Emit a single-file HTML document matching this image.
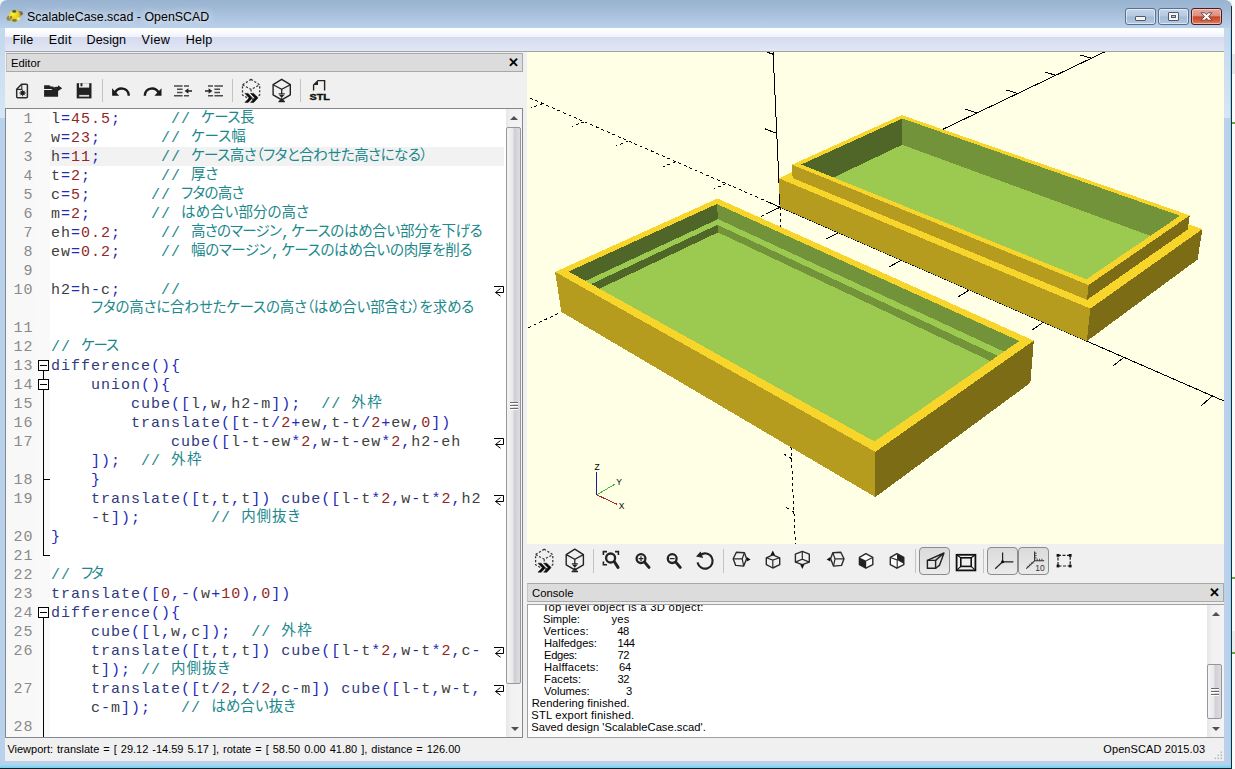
<!DOCTYPE html><html lang="ja"><head><meta charset="utf-8"><title>ScalableCase.scad - OpenSCAD</title><style>

*{box-sizing:border-box;margin:0;padding:0}
html,body{width:1235px;height:769px;overflow:hidden;background:#f4f4f4}
body{position:relative;font-family:"Liberation Sans","Noto Sans CJK JP",sans-serif;font-size:12px;color:#000}
.abs{position:absolute}
#desk{left:1232px;top:0;width:3px;height:769px;background:#fbfbfb}
#frame{left:0;top:0;width:1232px;height:768px;background:linear-gradient(180deg,#98b3d0 0px,#a2bbd7 10px,#b0c7e2 20px,#b9d1ea 28px,#b9d1ea 100%);border-radius:7px 7px 0 0}
#frame-r{left:1231px;top:6px;width:1px;height:763px;background:#1c2a3a}
#frame-b{left:0;top:768px;width:1232px;height:1px;background:#10202c}
#frame-b2{left:0;top:765px;width:1231px;height:3px;background:linear-gradient(180deg,#9fd8f0,#6fd3f3)}
#ttlx{}.ttl{left:27px;top:8px;height:18px;line-height:18px;font-size:12.4px;white-space:nowrap;color:#000;text-shadow:0 0 7px rgba(255,255,255,.8),0 0 10px rgba(255,255,255,.6)}
#client{left:5px;top:28px;width:1219px;height:733px;background:#f0f0f0}
#menubar{left:0;top:0;width:1219px;height:24px;background:linear-gradient(180deg,#ffffff 0,#fcfdfe 3px,#eff2fa 9px,#d5dbee 9px,#dbe1f1 16px,#e2e7f6 23px);border-bottom:1px solid #a3a3a3}
.mi{position:absolute;top:3px;height:18px;line-height:18px;font-size:12.6px;white-space:nowrap}
.docktitle{position:absolute;height:19px;background:#dcdcdc;border:1px solid #a8a8a8;border-left-color:#c4c4c4;font-size:11.3px;line-height:19px;padding-left:4px;white-space:nowrap}
.docktitle b{position:absolute;right:3px;top:0;font-weight:bold;font-size:13px;line-height:17px}
.sep{position:absolute;width:1px;background:#c5c5c5}
.ico{position:absolute;overflow:visible}
/* editor */
#ed{left:0;top:80px;width:518px;height:630px;border:1px solid #828790;background:#fff;overflow:hidden}
#gutter{left:0;top:0;width:44px;height:628px;background:#f8f8f8}
#foldm{left:29px;top:0;width:15px;height:628px;background:#f9f9f9}
.row{position:absolute;left:0;height:19px;line-height:19px;white-space:pre;font-family:"Liberation Mono","Noto Sans CJK JP",monospace;font-size:15px;letter-spacing:1px}
.ln{position:absolute;left:0;width:27.5px;text-align:right;color:#8a8a8a}
.code{position:absolute;left:45px;color:#404040}
.k{color:#303a7c}.o{color:#2329b8}.n{color:#922626}.c{color:#1b888c}
.j{font-family:"Noto Sans CJK JP",sans-serif;font-size:14.5px;letter-spacing:0;font-feature-settings:"palt";position:relative;top:-3.5px;display:inline-block;white-space:pre;vertical-align:top;line-height:19px;overflow:visible}
.wrapm{position:absolute}
/* scrollbars */
.sb{position:absolute;background:linear-gradient(90deg,#e6e6e6,#f1f1f1 30%,#f4f4f4);}
.thumb{position:absolute;border:1px solid #979797;border-radius:2px;background:linear-gradient(90deg,#f4f4f4 0,#e9e9ec 45%,#cfcfd6 55%,#dcdce2 100%)}
.arr{position:absolute;width:0;height:0;border-left:4px solid transparent;border-right:4px solid transparent}
.arr.up{border-bottom:4px solid #505050}
.arr.dn{border-top:4px solid #505050}
.grip{position:absolute;width:8px;height:1px;background:#6a6a6a;box-shadow:0 1px 0 #fff}
/* console */
#con{left:522px;top:576px;width:697px;height:134px;background:#fff;border:1px solid #a0a0a0;border-right:none;overflow:hidden}
.cl{position:absolute;height:12px;line-height:12px;font-size:11.2px;white-space:pre;color:#000}
#status{left:0;top:710px;width:1219px;height:23px;background:#f0f0f0}
#status span{position:absolute;top:4px;font-size:11px;line-height:14px;white-space:pre}
.pbtn{position:absolute;border:1px solid #8e8e8e;border-radius:3px;background:linear-gradient(180deg,#dedede,#e9e9e9)}

</style></head><body>
<div id="desk" class="abs"></div>
<div class="abs" style="left:1232px;top:54px;width:3px;height:20px;background:#e8e8e8"></div>
<div class="abs" style="left:1232px;top:631px;width:3px;height:22px;background:#ececec"></div>
<div class="abs" style="left:1232px;top:122px;width:3px;height:2px;background:#6aa43a"></div>
<div class="abs" style="left:1232px;top:577px;width:3px;height:2px;background:#6aa43a"></div>
<div class="abs" style="left:1232px;top:652px;width:3px;height:2px;background:#6aa43a"></div>
<div id="frame" class="abs"></div><div id="frame-b2" class="abs"></div><div class="abs" style="left:0;top:28px;width:5px;height:90px;background:linear-gradient(180deg,#c3d7ed,#d6e6f6)"></div><div class="abs" style="left:1224px;top:28px;width:6px;height:90px;background:linear-gradient(180deg,#c3d7ed,#d6e6f6)"></div><div class="abs" style="left:1229.5px;top:30px;width:1.5px;height:737px;background:#8fd6f2"></div><div id="frame-r" class="abs"></div><div id="frame-b" class="abs"></div>
<svg class="abs" style="left:0;top:0" width="32" height="28" viewBox="0 0 32 28"><defs><radialGradient id="ag" cx=".35" cy=".35" r=".75"><stop offset="0" stop-color="#f8f046"/><stop offset=".6" stop-color="#e8cc28"/><stop offset="1" stop-color="#b89a18"/></radialGradient></defs><ellipse cx="20.3" cy="13.4" rx="2.3" ry="2.3" fill="#8c7636"/><ellipse cx="22.1" cy="13.6" rx=".8" ry="1" fill="#5c5c50"/><ellipse cx="9.3" cy="18.3" rx="2.7" ry="2.5" fill="#94845a"/><ellipse cx="14.6" cy="15.8" rx="5.8" ry="5.6" fill="url(#ag)"/><ellipse cx="14.2" cy="11.4" rx="2.1" ry="1.4" fill="#4d6612"/><ellipse cx="18.5" cy="18.7" rx="2" ry="1.8" fill="#e2ee6c"/><ellipse cx="14.4" cy="20.4" rx="2.3" ry="1.3" fill="#8c7a12"/><ellipse cx="11" cy="17.4" rx="1.3" ry="1.6" fill="#9a8638"/></svg>
<div class="abs ttl" id="ttl" style="letter-spacing:0.017px;">ScalableCase.scad - OpenSCAD</div>

<div class="abs" style="left:1125px;top:8px;width:31px;height:17px;border:1px solid #5a6f8c;border-radius:3px;box-shadow:inset 0 0 0 1px rgba(255,255,255,.55);background:linear-gradient(180deg,#c5d6ea 0,#b4c9e2 48%,#a3bad6 52%,#b2c8e2 100%)"></div>
<div class="abs" style="left:1135px;top:16px;width:11px;height:5px;border:1px solid #50596a;border-radius:1px;background:#f4f4f4"></div>
<div class="abs" style="left:1158px;top:8px;width:31px;height:17px;border:1px solid #5a6f8c;border-radius:3px;box-shadow:inset 0 0 0 1px rgba(255,255,255,.55);background:linear-gradient(180deg,#c5d6ea 0,#b4c9e2 48%,#a3bad6 52%,#b2c8e2 100%)"></div>
<div class="abs" style="left:1168px;top:12px;width:11px;height:9px;border:1px solid #50596a;border-radius:1px;background:#f4f4f4"></div>
<div class="abs" style="left:1171px;top:15px;width:5px;height:3px;border:1px solid #50596a;background:#b8c6da"></div>
<div class="abs" style="left:1191px;top:8px;width:31px;height:17px;border:1px solid #4a1c22;border-radius:3px;box-shadow:inset 0 0 0 1px rgba(255,220,210,.6);background:linear-gradient(180deg,#e9a99b 0,#dd8e7f 46%,#c8452c 52%,#d4603f 80%,#e08a6a 100%)"></div>
<svg class="abs" style="left:1200px;top:11px" width="13" height="11" viewBox="0 0 13 11"><path d="M1 1.8 4.7 1.8 6.5 3.7 8.3 1.8 12 1.8 8.5 5.4 12 9.2 8.3 9.2 6.5 7.2 4.7 9.2 1 9.2 4.5 5.4Z" fill="#fff" stroke="#5a3f44" stroke-width=".9" stroke-linejoin="round"/></svg>

<div id="client" class="abs">
<div id="menubar" class="abs">
<span class="mi" id="m0" style="letter-spacing:0.176px;left:7.4px">File</span>
<span class="mi" id="m1" style="letter-spacing:0.349px;left:43.7px">Edit</span>
<span class="mi" id="m2" style="letter-spacing:0.049px;left:81.6px">Design</span>
<span class="mi" id="m3" style="letter-spacing:0.430px;left:136.6px">View</span>
<span class="mi" id="m4" style="letter-spacing:0.248px;left:180.7px">Help</span>
</div>
<div class="docktitle" style="left:1px;top:25px;width:517px">Editor<b>&#x2715;</b></div>
<div id="ed" class="abs">
<div id="gutter" class="abs"></div><div id="foldm" class="abs"></div>
<div class="abs" style="left:44px;top:38px;width:454px;height:19px;background:#f2f2f2"></div>
<div class="row" style="top:0.5px;width:500px"><span class="ln">1</span><span class="code">l<span class="o">=</span><span class="n">45.5</span><span class="o">;</span>     <span class="c">// <span class="j" style="letter-spacing:-0.42px">ケース長</span></span></span></div>
<div class="row" style="top:19.5px;width:500px"><span class="ln">2</span><span class="code">w<span class="o">=</span><span class="n">23</span><span class="o">;</span>      <span class="c">// <span class="j" style="letter-spacing:-0.04px">ケース幅</span></span></span></div>
<div class="row" style="top:38.5px;width:500px"><span class="ln">3</span><span class="code">h<span class="o">=</span><span class="n">11</span><span class="o">;</span>      <span class="c">// <span class="j" style="letter-spacing:-0.48px">ケース高さ（フタと合わせた高さになる）</span></span></span></div>
<div class="row" style="top:57.5px;width:500px"><span class="ln">4</span><span class="code">t<span class="o">=</span><span class="n">2</span><span class="o">;</span>       <span class="c">// <span class="j" style="letter-spacing:-0.41px">厚さ</span></span></span></div>
<div class="row" style="top:76.5px;width:500px"><span class="ln">5</span><span class="code">c<span class="o">=</span><span class="n">5</span><span class="o">;</span>      <span class="c">// <span class="j" style="letter-spacing:-0.73px">フタの高さ</span></span></span></div>
<div class="row" style="top:95.5px;width:500px"><span class="ln">6</span><span class="code">m<span class="o">=</span><span class="n">2</span><span class="o">;</span>      <span class="c">// <span class="j" style="letter-spacing:0.05px">はめ合い部分の高さ</span></span></span></div>
<div class="row" style="top:114.5px;width:500px"><span class="ln">7</span><span class="code">eh<span class="o">=</span><span class="n">0.2</span><span class="o">;</span>    <span class="c">// <span class="j" style="letter-spacing:-0.78px">高さのマージン</span>,<span class="j" style="letter-spacing:-0.30px">ケースのはめ合い部分を下げる</span></span></span></div>
<div class="row" style="top:133.5px;width:500px"><span class="ln">8</span><span class="code">ew<span class="o">=</span><span class="n">0.2</span><span class="o">;</span>    <span class="c">// <span class="j" style="letter-spacing:-0.42px">幅のマージン</span>,<span class="j" style="letter-spacing:-0.30px">ケースのはめ合いの肉厚を削る</span></span></span></div>
<div class="row" style="top:152.5px;width:500px"><span class="ln">9</span><span class="code"></span></div>
<div class="row" style="top:171.5px;width:500px"><span class="ln">10</span><span class="code">h2<span class="o">=</span>h<span class="o">-</span>c<span class="o">;</span>    <span class="c">//</span></span></div>
<svg class="wrapm" style="left:488px;top:177px" width="11" height="11" viewBox="0 0 11 11"><path d="M0 .5H9.5V6.5H1.5M6.5 2.5 1.5 6.5 6.5 10.2" fill="none" stroke="#000" stroke-width="1"/></svg>
<div class="row" style="top:190.5px;width:500px"><span class="code"><span class="c">    <span class="j" style="letter-spacing:-0.18px">フタの高さに合わせたケースの高さ（はめ合い部含む）を求める</span></span></span></div>
<div class="row" style="top:209.5px;width:500px"><span class="ln">11</span><span class="code"></span></div>
<div class="row" style="top:228.5px;width:500px"><span class="ln">12</span><span class="code"><span class="c">// <span class="j" style="letter-spacing:-1.06px">ケース</span></span></span></div>
<div class="row" style="top:247.5px;width:500px"><span class="ln">13</span><span class="code"><span class="k">difference</span><span class="o">(</span><span class="o">)</span><span class="o">{</span></span></div>
<div class="row" style="top:266.5px;width:500px"><span class="ln">14</span><span class="code">    <span class="k">union</span><span class="o">(</span><span class="o">)</span><span class="o">{</span></span></div>
<div class="row" style="top:285.5px;width:500px"><span class="ln">15</span><span class="code">        <span class="k">cube</span><span class="o">(</span><span class="o">[</span>l<span class="o">,</span>w<span class="o">,</span>h2<span class="o">-</span>m<span class="o">]</span><span class="o">)</span><span class="o">;</span>  <span class="c">// <span class="j" style="letter-spacing:1.50px">外枠</span></span></span></div>
<div class="row" style="top:304.5px;width:500px"><span class="ln">16</span><span class="code">        <span class="k">translate</span><span class="o">(</span><span class="o">[</span>t<span class="o">-</span>t<span class="o">/</span><span class="n">2</span><span class="o">+</span>ew<span class="o">,</span>t<span class="o">-</span>t<span class="o">/</span><span class="n">2</span><span class="o">+</span>ew<span class="o">,</span><span class="n">0</span><span class="o">]</span><span class="o">)</span></span></div>
<div class="row" style="top:323.5px;width:500px"><span class="ln">17</span><span class="code">            <span class="k">cube</span><span class="o">(</span><span class="o">[</span>l<span class="o">-</span>t<span class="o">-</span>ew<span class="o">*</span><span class="n">2</span><span class="o">,</span>w<span class="o">-</span>t<span class="o">-</span>ew<span class="o">*</span><span class="n">2</span><span class="o">,</span>h2<span class="o">-</span>eh</span></div>
<svg class="wrapm" style="left:488px;top:329px" width="11" height="11" viewBox="0 0 11 11"><path d="M0 .5H9.5V6.5H1.5M6.5 2.5 1.5 6.5 6.5 10.2" fill="none" stroke="#000" stroke-width="1"/></svg>
<div class="row" style="top:342.5px;width:500px"><span class="code">    <span class="o">]</span><span class="o">)</span><span class="o">;</span>  <span class="c">// <span class="j" style="letter-spacing:1.50px">外枠</span></span></span></div>
<div class="row" style="top:361.5px;width:500px"><span class="ln">18</span><span class="code">    <span class="o">}</span></span></div>
<div class="row" style="top:380.5px;width:500px"><span class="ln">19</span><span class="code">    <span class="k">translate</span><span class="o">(</span><span class="o">[</span>t<span class="o">,</span>t<span class="o">,</span>t<span class="o">]</span><span class="o">)</span> <span class="k">cube</span><span class="o">(</span><span class="o">[</span>l<span class="o">-</span>t<span class="o">*</span><span class="n">2</span><span class="o">,</span>w<span class="o">-</span>t<span class="o">*</span><span class="n">2</span><span class="o">,</span>h2</span></div>
<svg class="wrapm" style="left:488px;top:386px" width="11" height="11" viewBox="0 0 11 11"><path d="M0 .5H9.5V6.5H1.5M6.5 2.5 1.5 6.5 6.5 10.2" fill="none" stroke="#000" stroke-width="1"/></svg>
<div class="row" style="top:399.5px;width:500px"><span class="code">    <span class="o">-</span>t<span class="o">]</span><span class="o">)</span><span class="o">;</span>       <span class="c">// <span class="j" style="letter-spacing:0.95px">内側抜き</span></span></span></div>
<div class="row" style="top:418.5px;width:500px"><span class="ln">20</span><span class="code"><span class="o">}</span></span></div>
<div class="row" style="top:437.5px;width:500px"><span class="ln">21</span><span class="code"></span></div>
<div class="row" style="top:456.5px;width:500px"><span class="ln">22</span><span class="code"><span class="c">// <span class="j" style="letter-spacing:-1.89px">フタ</span></span></span></div>
<div class="row" style="top:475.5px;width:500px"><span class="ln">23</span><span class="code"><span class="k">translate</span><span class="o">(</span><span class="o">[</span><span class="n">0</span><span class="o">,</span><span class="o">-</span><span class="o">(</span>w<span class="o">+</span><span class="n">10</span><span class="o">)</span><span class="o">,</span><span class="n">0</span><span class="o">]</span><span class="o">)</span></span></div>
<div class="row" style="top:494.5px;width:500px"><span class="ln">24</span><span class="code"><span class="k">difference</span><span class="o">(</span><span class="o">)</span><span class="o">{</span></span></div>
<div class="row" style="top:513.5px;width:500px"><span class="ln">25</span><span class="code">    <span class="k">cube</span><span class="o">(</span><span class="o">[</span>l<span class="o">,</span>w<span class="o">,</span>c<span class="o">]</span><span class="o">)</span><span class="o">;</span>  <span class="c">// <span class="j" style="letter-spacing:1.50px">外枠</span></span></span></div>
<div class="row" style="top:532.5px;width:500px"><span class="ln">26</span><span class="code">    <span class="k">translate</span><span class="o">(</span><span class="o">[</span>t<span class="o">,</span>t<span class="o">,</span>t<span class="o">]</span><span class="o">)</span> <span class="k">cube</span><span class="o">(</span><span class="o">[</span>l<span class="o">-</span>t<span class="o">*</span><span class="n">2</span><span class="o">,</span>w<span class="o">-</span>t<span class="o">*</span><span class="n">2</span><span class="o">,</span>c<span class="o">-</span></span></div>
<svg class="wrapm" style="left:488px;top:538px" width="11" height="11" viewBox="0 0 11 11"><path d="M0 .5H9.5V6.5H1.5M6.5 2.5 1.5 6.5 6.5 10.2" fill="none" stroke="#000" stroke-width="1"/></svg>
<div class="row" style="top:551.5px;width:500px"><span class="code">    t<span class="o">]</span><span class="o">)</span><span class="o">;</span> <span class="c">// <span class="j" style="letter-spacing:0.95px">内側抜き</span></span></span></div>
<div class="row" style="top:570.5px;width:500px"><span class="ln">27</span><span class="code">    <span class="k">translate</span><span class="o">(</span><span class="o">[</span>t<span class="o">/</span><span class="n">2</span><span class="o">,</span>t<span class="o">/</span><span class="n">2</span><span class="o">,</span>c<span class="o">-</span>m<span class="o">]</span><span class="o">)</span> <span class="k">cube</span><span class="o">(</span><span class="o">[</span>l<span class="o">-</span>t<span class="o">,</span>w<span class="o">-</span>t<span class="o">,</span></span></div>
<svg class="wrapm" style="left:488px;top:576px" width="11" height="11" viewBox="0 0 11 11"><path d="M0 .5H9.5V6.5H1.5M6.5 2.5 1.5 6.5 6.5 10.2" fill="none" stroke="#000" stroke-width="1"/></svg>
<div class="row" style="top:589.5px;width:500px"><span class="code">    c<span class="o">-</span>m<span class="o">]</span><span class="o">)</span><span class="o">;</span>   <span class="c">// <span class="j" style="letter-spacing:0.11px">はめ合い抜き</span></span></span></div>
<div class="row" style="top:608.5px;width:500px"><span class="ln">28</span><span class="code"></span></div>
<div class="abs" style="left:37px;top:262px;width:1px;height:8px;background:#000"></div>
<div class="abs" style="left:37px;top:281px;width:1px;height:166px;background:#000"></div>
<div class="abs" style="left:37px;top:370px;width:7px;height:1px;background:#000"></div>
<div class="abs" style="left:37px;top:446px;width:7px;height:1px;background:#000"></div>
<div class="abs" style="left:32px;top:251px;width:11px;height:11px;border:1px solid #000;background:#fff"></div><div class="abs" style="left:34px;top:256px;width:7px;height:1px;background:#000"></div>
<div class="abs" style="left:32px;top:270px;width:11px;height:11px;border:1px solid #000;background:#fff"></div><div class="abs" style="left:34px;top:275px;width:7px;height:1px;background:#000"></div>
<div class="abs" style="left:37px;top:509px;width:1px;height:119px;background:#000"></div>
<div class="abs" style="left:32px;top:498px;width:11px;height:11px;border:1px solid #000;background:#fff"></div><div class="abs" style="left:34px;top:503px;width:7px;height:1px;background:#000"></div>
<div class="sb" style="left:500px;top:0;width:16px;height:628px"></div>
<div class="arr up" style="left:504px;top:7px"></div>
<div class="arr dn" style="left:505px;top:618px"></div>
<div class="thumb" style="left:500px;top:18px;width:15px;height:557px"></div>
<div class="grip" style="left:504px;top:293px"></div>
<div class="grip" style="left:504px;top:296px"></div>
<div class="grip" style="left:504px;top:299px"></div>
</div>
<div class="docktitle" style="left:522px;top:555px;width:697px">Console<b>&#x2715;</b></div>
<div id="con" class="abs">
<div class="cl" id="c0" style="letter-spacing:0.315px;left:14.6px;top:-4px">Top level object is a 3D object:</div>
<div class="cl" id="c1" style="letter-spacing:-0.087px;left:15.1px;top:8px">Simple:</div>
<div class="cl" id="v1" style="letter-spacing:0.293px;left:83.4px;top:8px">yes</div>
<div class="cl" id="c2" style="letter-spacing:0.277px;left:15.5px;top:20px">Vertices:</div>
<div class="cl" id="v2" style="letter-spacing:-0.327px;left:89.2px;top:20px">48</div>
<div class="cl" id="c3" style="letter-spacing:-0.070px;left:16.1px;top:32px">Halfedges:</div>
<div class="cl" id="v3" style="letter-spacing:-0.624px;left:89.6px;top:32px">144</div>
<div class="cl" id="c4" style="letter-spacing:-0.341px;left:16.1px;top:44px">Edges:</div>
<div class="cl" id="v4" style="letter-spacing:-0.527px;left:89.6px;top:44px">72</div>
<div class="cl" id="c5" style="letter-spacing:0.186px;left:16.1px;top:56px">Halffacets:</div>
<div class="cl" id="v5" style="letter-spacing:-0.327px;left:91.0px;top:56px">64</div>
<div class="cl" id="c6" style="letter-spacing:0.045px;left:16.1px;top:68px">Facets:</div>
<div class="cl" id="v6" style="letter-spacing:-0.527px;left:89.6px;top:68px">32</div>
<div class="cl" id="c7" style="letter-spacing:-0.066px;left:16.1px;top:80px">Volumes:</div>
<div class="cl" id="v7" style="letter-spacing:-0.534px;left:97.9px;top:80px">3</div>
<div class="cl" id="c8" style="letter-spacing:0.084px;left:3.7px;top:92px">Rendering finished.</div>
<div class="cl" id="c9" style="letter-spacing:0.200px;left:3.3px;top:104px">STL export finished.</div>
<div class="cl" id="c10" style="letter-spacing:0.013px;left:3.3px;top:116px">Saved design 'ScalableCase.scad'.</div>
<div class="sb" style="left:679px;top:0;width:17px;height:132px"></div>
<div class="arr up" style="left:684px;top:7px"></div>
<div class="arr dn" style="left:684px;top:122px"></div>
<div class="thumb" style="left:679px;top:59px;width:15px;height:55px"></div>
<div class="grip" style="left:683px;top:83px"></div>
<div class="grip" style="left:683px;top:86px"></div>
<div class="grip" style="left:683px;top:89px"></div>
</div>
<div id="status" class="abs"><span id="st1" style="word-spacing:0.956px;left:2.4px">Viewport: translate = [ 29.12 -14.59 5.17 ], rotate = [ 58.50 0.00 41.80 ], distance = 126.00</span><span id="st2" style="letter-spacing:0.094px;left:1098.3px">OpenSCAD 2015.03</span>
<svg class="abs" style="left:1208.5px;top:13px" width="9" height="9" viewBox="0 0 9 9"><g fill="#bcbcbc"><rect x="6.5" y="0.5" width="1.6" height="1.6"/><rect x="6.5" y="3.5" width="1.6" height="1.6"/><rect x="6.5" y="6.5" width="1.6" height="1.6"/><rect x="3.5" y="3.5" width="1.6" height="1.6"/><rect x="3.5" y="6.5" width="1.6" height="1.6"/><rect x="0.5" y="6.5" width="1.6" height="1.6"/></g></svg>
</div>
</div>
<svg class="abs" style="left:0;top:0" width="1235" height="769" viewBox="0 0 1235 769"><defs><clipPath id="vp"><rect x="527" y="52" width="697" height="492"/></clipPath></defs>
<rect x="527" y="52" width="697" height="492" fill="#ffffe5"/>
<g clip-path="url(#vp)">
<g stroke="#000" stroke-width="1" shape-rendering="crispEdges">
<line x1="780.1" y1="207.2" x2="2098.2" y2="782.8"/>
<line x1="780.1" y1="207.2" x2="1255.5" y2="-20.3"/>
<line x1="780.1" y1="207.2" x2="708.9" y2="-1358.7"/>
<line x1="780.1" y1="207.2" x2="296.8" y2="-3.8" stroke-dasharray="3 3"/>
<line x1="780.1" y1="207.2" x2="-718.5" y2="924.3" stroke-dasharray="3 3"/>
<line x1="780.1" y1="207.2" x2="808.7" y2="837.5" stroke-dasharray="3 3"/>
<line x1="780.1" y1="207.2" x2="768.0" y2="213.0"/>
<line x1="780.1" y1="207.2" x2="768.4" y2="202.1"/>
<line x1="780.1" y1="207.2" x2="768.4" y2="202.1"/>
<line x1="838.4" y1="232.7" x2="826.3" y2="238.9"/>
<line x1="835.1" y1="180.9" x2="823.5" y2="176.2"/>
<line x1="776.7" y1="133.4" x2="764.7" y2="128.7"/>
<line x1="725.9" y1="183.6" x2="713.8" y2="189.0" stroke-dasharray="3 3"/>
<line x1="720.3" y1="235.8" x2="708.6" y2="230.3" stroke-dasharray="3 3"/>
<line x1="783.2" y1="276.2" x2="771.9" y2="270.8" stroke-dasharray="3 3"/>
<line x1="901.3" y1="260.1" x2="889.3" y2="266.9"/>
<line x1="886.0" y1="156.6" x2="874.4" y2="152.2"/>
<line x1="773.1" y1="54.2" x2="760.7" y2="50.0"/>
<line x1="675.5" y1="161.6" x2="663.4" y2="166.6" stroke-dasharray="3 3"/>
<line x1="655.2" y1="267.0" x2="643.5" y2="260.9" stroke-dasharray="3 3"/>
<line x1="786.2" y1="340.9" x2="775.2" y2="335.1" stroke-dasharray="3 3"/>
<line x1="969.4" y1="289.9" x2="957.6" y2="297.2"/>
<line x1="933.1" y1="134.0" x2="921.6" y2="130.0"/>
<line x1="769.3" y1="-30.9" x2="756.3" y2="-34.6"/>
<line x1="628.4" y1="141.0" x2="616.3" y2="145.7" stroke-dasharray="3 3"/>
<line x1="584.0" y1="301.1" x2="572.4" y2="294.4" stroke-dasharray="3 3"/>
<line x1="788.9" y1="401.5" x2="778.2" y2="395.5" stroke-dasharray="3 3"/>
<line x1="1043.4" y1="322.2" x2="1031.8" y2="330.2"/>
<line x1="976.9" y1="113.1" x2="965.5" y2="109.3"/>
<line x1="765.1" y1="-122.7" x2="751.7" y2="-125.7"/>
<line x1="584.3" y1="121.8" x2="572.3" y2="126.2" stroke-dasharray="3 3"/>
<line x1="505.8" y1="338.5" x2="494.3" y2="331.2" stroke-dasharray="3 3"/>
<line x1="791.5" y1="458.6" x2="781.1" y2="452.4" stroke-dasharray="3 3"/>
<line x1="1124.0" y1="357.4" x2="1112.8" y2="366.1"/>
<line x1="1017.7" y1="93.5" x2="1006.5" y2="90.0"/>
<line x1="760.6" y1="-222.0" x2="746.7" y2="-224.2"/>
<line x1="543.0" y1="103.7" x2="531.0" y2="107.8" stroke-dasharray="3 3"/>
<line x1="419.5" y1="379.8" x2="408.2" y2="371.7" stroke-dasharray="3 3"/>
<line x1="794.0" y1="512.3" x2="783.9" y2="505.9" stroke-dasharray="3 3"/>
<line x1="1212.3" y1="396.0" x2="1201.5" y2="405.5"/>
<line x1="1055.8" y1="75.3" x2="1044.7" y2="72.0"/>
<line x1="755.7" y1="-329.7" x2="741.3" y2="-330.9"/>
<line x1="504.2" y1="86.7" x2="492.3" y2="90.6" stroke-dasharray="3 3"/>
<line x1="323.7" y1="425.6" x2="312.8" y2="416.6" stroke-dasharray="3 3"/>
<line x1="796.3" y1="563.0" x2="786.4" y2="556.5" stroke-dasharray="3 3"/>
<line x1="1309.3" y1="438.3" x2="1299.1" y2="448.9"/>
<line x1="1091.5" y1="58.2" x2="1080.5" y2="55.1"/>
<line x1="750.3" y1="-446.9" x2="735.4" y2="-447.0"/>
<line x1="467.6" y1="70.8" x2="455.8" y2="74.4" stroke-dasharray="3 3"/>
<line x1="216.9" y1="476.7" x2="206.6" y2="466.7" stroke-dasharray="3 3"/>
<line x1="798.4" y1="611.0" x2="788.9" y2="604.3" stroke-dasharray="3 3"/>
<line x1="1416.4" y1="485.1" x2="1407.0" y2="496.8"/>
<line x1="1124.9" y1="42.2" x2="1114.1" y2="39.3"/>
<line x1="744.5" y1="-575.0" x2="728.9" y2="-573.8"/>
<line x1="433.1" y1="55.7" x2="421.4" y2="59.2" stroke-dasharray="3 3"/>
<line x1="97.0" y1="534.1" x2="87.4" y2="522.8" stroke-dasharray="3 3"/>
<line x1="800.5" y1="656.4" x2="791.2" y2="649.6" stroke-dasharray="3 3"/>
<line x1="1535.3" y1="537.0" x2="1527.0" y2="550.0"/>
<line x1="1156.4" y1="27.2" x2="1145.7" y2="24.4"/>
<line x1="738.1" y1="-715.6" x2="721.8" y2="-712.7"/>
<line x1="400.5" y1="41.5" x2="388.9" y2="44.8" stroke-dasharray="3 3"/>
<line x1="-38.6" y1="599.0" x2="-47.2" y2="586.2" stroke-dasharray="3 3"/>
<line x1="802.5" y1="699.4" x2="793.4" y2="692.6" stroke-dasharray="3 3"/>
<line x1="1668.0" y1="595.0" x2="1661.0" y2="609.6"/>
<line x1="1186.0" y1="13.0" x2="1175.5" y2="10.4"/>
<line x1="731.1" y1="-870.5" x2="714.1" y2="-865.7"/>
<line x1="369.7" y1="28.0" x2="358.2" y2="31.1" stroke-dasharray="3 3"/>
<line x1="-193.2" y1="673.0" x2="-200.3" y2="658.3" stroke-dasharray="3 3"/>
<line x1="804.3" y1="740.3" x2="795.4" y2="733.4" stroke-dasharray="3 3"/>
<line x1="1817.1" y1="660.1" x2="1811.9" y2="676.5"/>
<line x1="1214.0" y1="-0.4" x2="1203.6" y2="-2.8"/>
<line x1="723.3" y1="-1042.1" x2="705.4" y2="-1035.0"/>
<line x1="340.5" y1="15.3" x2="329.1" y2="18.2" stroke-dasharray="3 3"/>
<line x1="-370.9" y1="758.0" x2="-376.1" y2="741.1" stroke-dasharray="3 3"/>
<line x1="806.1" y1="779.1" x2="797.4" y2="772.2" stroke-dasharray="3 3"/>
<line x1="1985.9" y1="733.8" x2="1983.0" y2="752.5"/>
<line x1="1240.4" y1="-13.0" x2="1230.2" y2="-15.3"/>
<line x1="714.6" y1="-1233.2" x2="695.9" y2="-1223.3"/>
<line x1="312.7" y1="3.1" x2="301.5" y2="5.9" stroke-dasharray="3 3"/>
<line x1="-577.5" y1="856.9" x2="-580.1" y2="837.1" stroke-dasharray="3 3"/>
<line x1="807.8" y1="816.1" x2="799.3" y2="809.2" stroke-dasharray="3 3"/>
</g>
<g shape-rendering="crispEdges">
<polygon fill="#9cc950" points="802.3,192.3 1083.1,310.5 1175.7,245.1 902.2,144.8"/>
<polygon fill="#f7d52b" points="1202.4,229.1 900.8,122.5 901.7,127.6 1187.7,229.5"/>
<polygon fill="#f7d52b" points="900.8,122.5 778.8,178.3 792.6,178.0 901.7,127.6"/>
<polygon fill="#4f6628" points="802.3,192.3 902.2,144.8 902.5,118.5 801.3,164.5"/>
<polygon fill="#72933a" points="902.2,144.8 1175.7,245.1 1180.0,215.7 902.5,118.5"/>
<polygon fill="#f7d52b" points="792.0,164.7 1088.6,285.0 1086.3,279.4 801.3,164.5"/>
<polygon fill="#f7d52b" points="1088.6,285.0 1189.8,215.4 1180.0,215.7 1086.3,279.4"/>
<polygon fill="#f7d52b" points="1189.8,215.4 901.8,115.1 902.5,118.5 1180.0,215.7"/>
<polygon fill="#f7d52b" points="901.8,115.1 792.0,164.7 801.3,164.5 902.5,118.5"/>
<polygon fill="#b59c1f" points="792.6,178.0 1087.0,299.9 1088.6,285.0 792.0,164.7"/>
<polygon fill="#7d6c16" points="1087.0,299.9 1187.7,229.5 1189.8,215.4 1088.6,285.0"/>
<polygon fill="#f7d52b" points="778.8,178.3 1090.3,308.6 1087.0,299.9 792.6,178.0"/>
<polygon fill="#f7d52b" points="1090.3,308.6 1202.4,229.1 1187.7,229.5 1087.0,299.9"/>
<polygon fill="#b59c1f" points="780.1,207.2 1086.8,341.2 1090.3,308.6 778.8,178.3"/>
<polygon fill="#7d6c16" points="1086.8,341.2 1197.6,259.5 1202.4,229.1 1090.3,308.6"/>
<polygon fill="#9cc950" points="585.5,295.3 873.5,458.5 1003.1,367.0 718.0,232.4"/>
<polygon fill="#4f6628" points="585.5,295.3 718.0,232.4 717.4,224.8 584.4,287.3"/>
<polygon fill="#72933a" points="718.0,232.4 1003.1,367.0 1003.6,358.6 717.4,224.8"/>
<polygon fill="#9cc950" points="571.0,287.7 874.4,459.8 873.5,449.6 584.4,287.3"/>
<polygon fill="#9cc950" points="874.4,459.8 1018.0,358.1 1003.6,358.6 873.5,449.6"/>
<polygon fill="#9cc950" points="1018.0,358.1 718.0,219.1 717.4,224.8 1003.6,358.6"/>
<polygon fill="#9cc950" points="718.0,219.1 571.0,287.7 584.4,287.3 717.4,224.8"/>
<polygon fill="#4f6628" points="571.0,287.7 718.0,219.1 716.9,204.0 568.6,271.5"/>
<polygon fill="#72933a" points="718.0,219.1 1018.0,358.1 1019.3,341.0 716.9,204.0"/>
<polygon fill="#f7d52b" points="555.1,271.9 875.3,451.8 874.4,441.5 568.6,271.5"/>
<polygon fill="#f7d52b" points="875.3,451.8 1033.8,340.6 1019.3,341.0 874.4,441.5"/>
<polygon fill="#f7d52b" points="1033.8,340.6 717.5,198.5 716.9,204.0 1019.3,341.0"/>
<polygon fill="#f7d52b" points="717.5,198.5 555.1,271.9 568.6,271.5 716.9,204.0"/>
<polygon fill="#b59c1f" points="561.3,311.9 875.3,497.1 875.3,451.8 555.1,271.9"/>
<polygon fill="#7d6c16" points="875.3,497.1 1030.4,382.8 1033.8,340.6 875.3,451.8"/>
</g>
<line x1="596.7" y1="494.8" x2="617.1" y2="504.3" stroke="#b02525" stroke-width="1" shape-rendering="crispEdges"/>
<line x1="596.7" y1="494.8" x2="614.9" y2="484.2" stroke="#3cb63c" stroke-width="1" shape-rendering="crispEdges"/>
<line x1="596.7" y1="494.8" x2="596.7" y2="471.5" stroke="#1c1c94" stroke-width="1" shape-rendering="crispEdges"/>
<text x="621.7" y="509.2" text-anchor="middle" font-family="Liberation Sans,sans-serif" font-size="8.5" fill="#000">X</text>
<text x="619.1" y="485.0" text-anchor="middle" font-family="Liberation Sans,sans-serif" font-size="8.5" fill="#000">Y</text>
<text x="597.2" y="469.8" text-anchor="middle" font-family="Liberation Sans,sans-serif" font-size="8.5" fill="#000">Z</text>
</g></svg>
<svg class="abs" style="left:0;top:0;pointer-events:none" width="1235" height="769" viewBox="0 0 1235 769"><defs><linearGradient id="pb" x1="0" y1="0" x2="0" y2="1"><stop offset="0" stop-color="#dadada"/><stop offset="1" stop-color="#ebebeb"/></linearGradient></defs><path d="M21.6 84.2H26.4a1 1 0 0 1 1 1V96.7a1 1 0 0 1-1 1H17.7a1 1 0 0 1-1-1V89.2Z" fill="none" stroke="#2a2a2a" stroke-width="1.5" stroke-linejoin="round"/><path d="M16.9 89.4H21.8V84.4" fill="none" stroke="#2a2a2a" stroke-width="1.1"/>
<circle cx="22.6" cy="93" r="2.2" fill="#222"/><path d="M22.6 89.7v6.6M19.3 93h6.6M20.3 90.7l4.6 4.6M24.9 90.7l-4.6 4.6" stroke="#222" stroke-width=".9"/>
<path d="M44.1 85.3H49.3L50.8 86.6H53.6V88.9H44.1Z" fill="#222"/>
<path d="M44.1 90H51.4C53 88.4 55.2 88 58.1 88.6V96.7H44.1Z" fill="#222"/>
<path d="M51.6 89.8C53.4 86.9 55.8 86.6 58 86.9V85.3L62.2 88.2 58 91.1V89.3C56 88.6 53.6 88.7 51.6 89.8Z" fill="#222"/>
<path d="M76.7 83.2H91.5V98.4H76.7Z" fill="#222"/><rect x="79" y="83.2" width="10.2" height="4.4" fill="#f0f0f0"/><rect x="80.5" y="83.2" width="1.9" height="3" fill="#222"/><rect x="79.2" y="94.9" width="9.9" height="1.8" fill="#d8d8d8"/>
<path d="M102.5 79V102" stroke="#c3c3c3" stroke-width="1" shape-rendering="crispEdges"/>
<path d="M115.2 92.4A7.2 7.2 0 0 1 128.7 94.6V95.7" fill="none" stroke="#1a1a1a" stroke-width="2.4"/><path d="M112.1 88.2V95.7H119.2Z" fill="#1a1a1a"/>
<g transform="translate(273.6,0) scale(-1,1)"><path d="M115.2 92.4A7.2 7.2 0 0 1 128.7 94.6V95.7" fill="none" stroke="#1a1a1a" stroke-width="2.4"/><path d="M112.1 88.2V95.7H119.2Z" fill="#1a1a1a"/></g>
<path d="M174 86H182.6M184 86H189M177 89.3H182.6M177 92.6H182.6M174 95.8H182.6M184 95.8H189" stroke="#4a4a4a" stroke-width="1.5"/>
<path d="M186 91H192" stroke="#222" stroke-width="1.5"/><path d="M184.6 91 188.4 88.2V93.8Z" fill="#222"/>
<path d="M208 86H213M214.4 86H223M214.4 89.3H220M214.4 92.6H220M208 95.8H213M214.4 95.8H223" stroke="#4a4a4a" stroke-width="1.5"/>
<path d="M205 91H211" stroke="#222" stroke-width="1.5"/><path d="M212.4 91 208.6 88.2V93.8Z" fill="#222"/>
<path d="M232.5 79V102" stroke="#c3c3c3" stroke-width="1" shape-rendering="crispEdges"/>
<path d="M251.1 79.4L242.5 84.8L242.5 95.0L251.1 100.0L259.7 95.0L259.7 84.8Z" fill="none" stroke="#333" stroke-width="1.25" stroke-linejoin="round" stroke-dasharray="2.2 1.7"/><path d="M242.5 84.8L251.1 89.4L259.7 84.8M251.1 89.4V93.4" fill="none" stroke="#333" stroke-width="1.125" stroke-dasharray="2.2 1.7"/><path d="M244.9 93.4L249.2 97.9L244.9 102.4H248.1L252.4 97.9L248.1 93.4Z" fill="#0c0c0c" stroke="#0c0c0c" stroke-width=".5"/><path d="M250.5 93.4L254.8 97.9L250.5 102.4H253.7L258.0 97.9L253.7 93.4Z" fill="#0c0c0c" stroke="#0c0c0c" stroke-width=".5"/>
<path d="M281.7 79.3L273.1 84.7L273.1 94.9L281.7 99.9L290.3 94.9L290.3 84.7Z" fill="none" stroke="#222" stroke-width="1.4" stroke-linejoin="round"/><path d="M273.1 84.7L281.7 89.3L290.3 84.7M281.7 89.3V94.3" fill="none" stroke="#222" stroke-width="1.26"/><path d="M278.7 93.9H284.7M278.5 101.7H284.9" stroke="#222" stroke-width="1.3"/><path d="M279.1 94.9H284.3L281.7 97.9ZM278.9 100.9H284.5L281.7 97.7Z" fill="#222"/>
<path d="M300.5 79V102" stroke="#c3c3c3" stroke-width="1" shape-rendering="crispEdges"/>
<path d="M313.6 90.6V85L318 80.6H324.6V90.6" fill="none" stroke="#222" stroke-width="1.4"/><path d="M313.8 85H318V80.8Z" fill="#222"/>
<text x="309.6" y="99.8" textLength="20.2" lengthAdjust="spacingAndGlyphs" font-family="Liberation Sans,sans-serif" font-weight="bold" font-size="9.4" fill="#111" stroke="#111" stroke-width=".45">STL</text><path d="M544.2 549.2L535.6 554.6L535.6 564.8L544.2 569.8L552.8 564.8L552.8 554.6Z" fill="none" stroke="#333" stroke-width="1.25" stroke-linejoin="round" stroke-dasharray="2.2 1.7"/><path d="M535.6 554.6L544.2 559.2L552.8 554.6M544.2 559.2V563.2" fill="none" stroke="#333" stroke-width="1.125" stroke-dasharray="2.2 1.7"/><path d="M538.0 563.2L542.3 567.7L538.0 572.2H541.2L545.5 567.7L541.2 563.2Z" fill="#0c0c0c" stroke="#0c0c0c" stroke-width=".5"/><path d="M543.6 563.2L547.9 567.7L543.6 572.2H546.8L551.1 567.7L546.8 563.2Z" fill="#0c0c0c" stroke="#0c0c0c" stroke-width=".5"/>
<path d="M574.8 549.2L566.2 554.6L566.2 564.8L574.8 569.8L583.4 564.8L583.4 554.6Z" fill="none" stroke="#222" stroke-width="1.4" stroke-linejoin="round"/><path d="M566.2 554.6L574.8 559.2L583.4 554.6M574.8 559.2V564.2" fill="none" stroke="#222" stroke-width="1.26"/><path d="M571.8 563.8H577.8M571.6 571.6H578.0" stroke="#222" stroke-width="1.3"/><path d="M572.2 564.8H577.4L574.8 567.8ZM572.0 570.8H577.6L574.8 567.6Z" fill="#222"/>
<path d="M593.5 549V573" stroke="#c3c3c3" stroke-width="1" shape-rendering="crispEdges"/>
<path d="M603.4 555V551.6H607M615 551.6H618.4V555M603.4 561.4V564.8H607" fill="none" stroke="#222" stroke-width="1.6"/>
<circle cx="610.6" cy="558" r="4.5" fill="none" stroke="#222" stroke-width="2.3"/><path d="M614.4 561.8L618.0 567.4" stroke="#222" stroke-width="3" stroke-linecap="round"/>
<circle cx="641" cy="558.6" r="4.4" fill="none" stroke="#222" stroke-width="2.3"/><path d="M644.8 562.4L649.0 567.4" stroke="#222" stroke-width="3" stroke-linecap="round"/>
<path d="M638.6 558.6h4.8M641 556.2v4.8" stroke="#222" stroke-width="1.2"/>
<circle cx="672.2" cy="558.6" r="4.4" fill="none" stroke="#222" stroke-width="2.3"/><path d="M676.0 562.4L680.2 567.4" stroke="#222" stroke-width="3" stroke-linecap="round"/>
<path d="M669.8 558.6h4.8" stroke="#222" stroke-width="1.2"/>
<path d="M700.2 555.2A7.6 7.6 0 1 1 697.6 562.4" fill="none" stroke="#222" stroke-width="2.1"/><path d="M696 556.6 703.2 558 700.6 551.6Z" fill="#222"/>
<path d="M723.5 549V573" stroke="#c3c3c3" stroke-width="1" shape-rendering="crispEdges"/>
<path d="M736.4 552.3 744.4 552.7 746.6 558.8 743.7 566.1 735.7 565.4 733.2 558.8Z" fill="none" stroke="#2a2a2a" stroke-width="1.4" stroke-linejoin="round"/><path d="M733.2 558.8H742.2L744.4 552.7M742.2 558.8 743.7 566.1" fill="none" stroke="#2a2a2a" stroke-width="1.2"/><path d="M746.8 556.9 750.6 559.4 746.8 561.6Z" fill="#111"/>
<path d="M772.8 554.8 779.7 557.8V564.7L772.8 568 766.3 564.7V557.8Z" fill="none" stroke="#2a2a2a" stroke-width="1.4" stroke-linejoin="round"/><path d="M766.3 557.8 772.8 560 779.7 557.8M772.8 560V568" fill="none" stroke="#2a2a2a" stroke-width="1.2"/><path d="M772.8 550.4 775 555H770.6Z" fill="#111"/>
<path d="M802.3 551.4 809.3 554.1V562.1L802.3 564.6 795.4 562.1V554.1Z" fill="none" stroke="#2a2a2a" stroke-width="1.4" stroke-linejoin="round"/><path d="M795.4 562.1 802.3 559.2 809.3 562.1M802.3 551.4V559.2" fill="none" stroke="#2a2a2a" stroke-width="1.2"/><path d="M802.3 569 804.4 564.4H800.2Z" fill="#111"/>
<g transform="translate(1577.2,0) scale(-1,1)"><path d="M736.4 552.3 744.4 552.7 746.6 558.8 743.7 566.1 735.7 565.4 733.2 558.8Z" fill="none" stroke="#2a2a2a" stroke-width="1.4" stroke-linejoin="round"/><path d="M733.2 558.8H742.2L744.4 552.7M742.2 558.8 743.7 566.1" fill="none" stroke="#2a2a2a" stroke-width="1.2"/><path d="M746.8 556.9 750.6 559.4 746.8 561.6Z" fill="#111"/></g>
<path d="M865.9 553.7 872.8 557.4V564.7L865.9 568.2 859.4 564.7V557.4Z" fill="#fbfbfb" stroke="#2a2a2a" stroke-width="1.4" stroke-linejoin="round"/><path d="M859.4 557.4 866.2 560.7V568.2L859.4 564.7Z" fill="#222"/><path d="M866.2 560.7 872.8 557.4" stroke="#2a2a2a" stroke-width="1.1"/>
<path d="M896.9 553.7 903.8 557.4V564.7L896.9 568.2 890.3 564.7V557.4Z" fill="#fbfbfb" stroke="#2a2a2a" stroke-width="1.4" stroke-linejoin="round"/><path d="M896.9 553.7 903.8 557.4V563.8L897.2 559.9Z" fill="#222"/><path d="M890.3 557.4 897.2 559.9V568.2" fill="none" stroke="#2a2a2a" stroke-width="1.1"/>
<path d="M915.5 549V573" stroke="#c3c3c3" stroke-width="1" shape-rendering="crispEdges"/>
<rect x="919.5" y="547.5" width="30" height="27" rx="3.5" fill="url(#pb)" stroke="#8c8c8c" stroke-width="1"/>
<path d="M927.4 560.4H935.6V568.2H927.4Z" fill="none" stroke="#222" stroke-width="1.4"/><path d="M927.4 560.4 944 553 939.4 565.4 935.6 568.2M935.6 560.4 944 553" fill="none" stroke="#222" stroke-width="1.4" stroke-linejoin="round"/>
<rect x="956.6" y="554.8" width="18.8" height="15.6" fill="none" stroke="#111" stroke-width="1.8"/><rect x="960.8" y="557.8" width="10.4" height="8.6" fill="none" stroke="#111" stroke-width="1.6"/><path d="M956.6 554.8 960.8 557.8M975.4 554.8 971.2 557.8M956.6 570.4 960.8 566.4M975.4 570.4 971.2 566.4" stroke="#111" stroke-width="1.1"/>
<path d="M983.5 549V573" stroke="#c3c3c3" stroke-width="1" shape-rendering="crispEdges"/>
<rect x="987.5" y="547.5" width="30" height="27" rx="3.5" fill="url(#pb)" stroke="#8c8c8c" stroke-width="1"/>
<rect x="1018.5" y="547.5" width="30" height="27" rx="3.5" fill="url(#pb)" stroke="#8c8c8c" stroke-width="1"/>
<path d="M1002.6 552.4V561.8M1002.6 561.8H1013.4M1002.6 561.8 995.2 568.8" fill="none" stroke="#222" stroke-width="1.2"/><circle cx="1002.6" cy="561.8" r="1.5" fill="#111"/>
<path d="M1034.6 551.4V560.8H1044.2M1034.6 560.8 1026.2 568.6" fill="none" stroke="#333" stroke-width="1.1"/><path d="M1034.6 553.2h2M1034.6 555.6h2M1034.6 558h2M1037.2 560.8v-2M1039.6 560.8v-2M1042 560.8v-2M1031.4 562l1.5 1.5M1029.4 563.8l1.5 1.5M1027.4 565.8l1.5 1.5" stroke="#333" stroke-width=".9"/><text x="1040" y="570.6" text-anchor="middle" font-family="Liberation Sans,sans-serif" font-size="8.5" fill="#333">10</text>
<path d="M1058 555.4H1070.2V566H1058Z" fill="none" stroke="#222" stroke-width="1.2" stroke-dasharray="3 1.5"/><g fill="#111"><rect x="1056.6" y="554" width="2.8" height="2.8"/><rect x="1068.8" y="554" width="2.8" height="2.8"/><rect x="1056.6" y="564.6" width="2.8" height="2.8"/><rect x="1068.8" y="564.6" width="2.8" height="2.8"/></g></svg>
</body></html>
